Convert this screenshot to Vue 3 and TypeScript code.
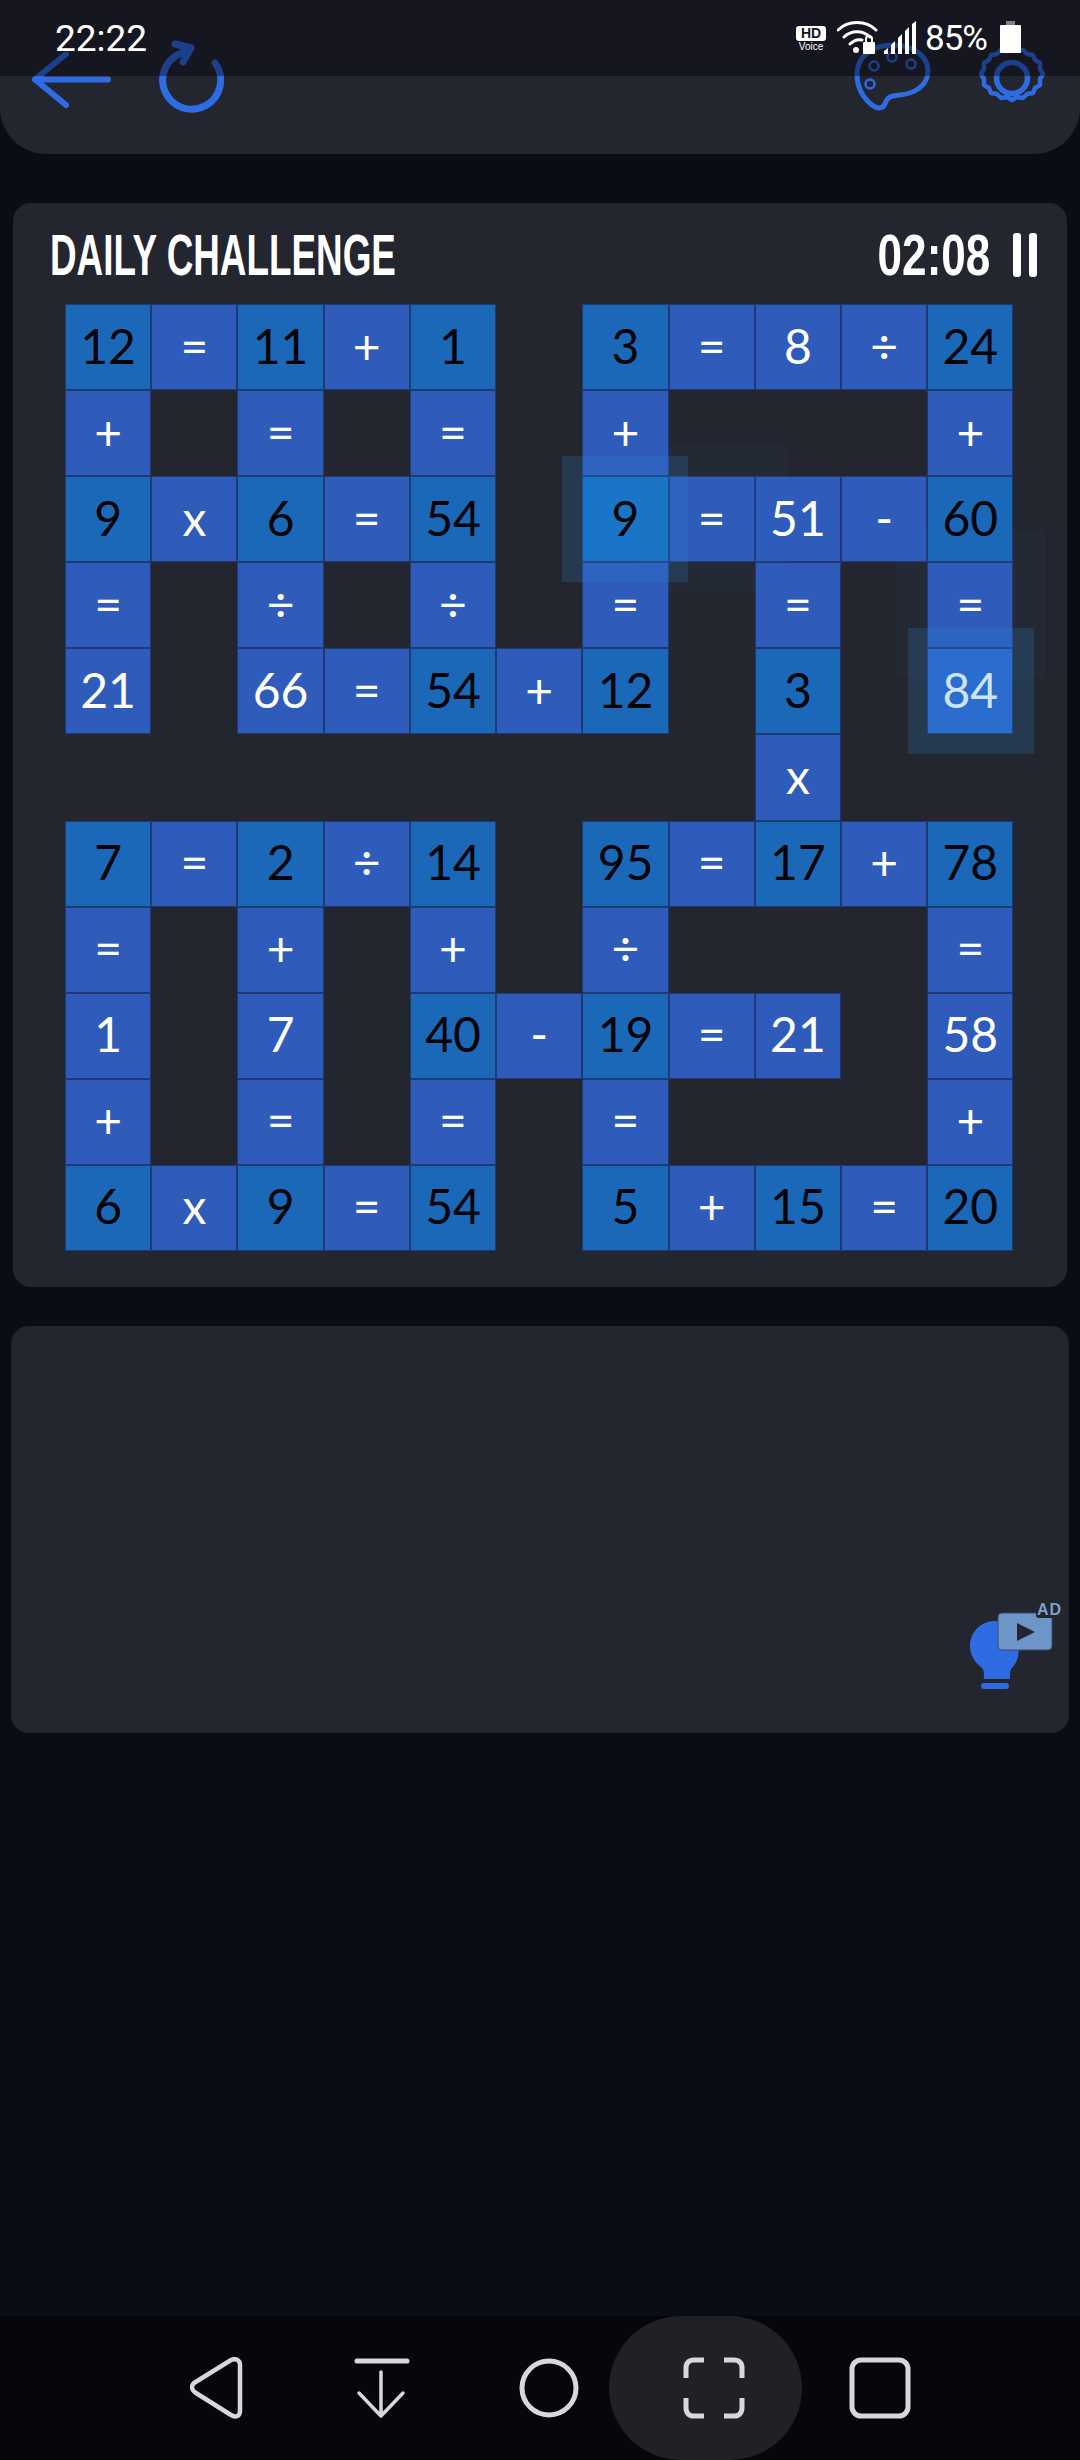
<script setup lang="ts">
type Tone = 'given' | 'open' | 'active' | 'glow'
interface Cell { text: string; tone: Tone }

// Board rows; "." is an empty slot, a leading "*" marks a pre-filled number.
const rows: string[] = [
  '*12 = *11 + *1 . *3 = 8 ÷ *24',
  '+ . = . = . + . . . +',
  '*9 x *6 = *54 . ^9 = 51 - *60',
  '= . ÷ . ÷ . = . = . =',
  '21 . 66 = *54 + *12 . *3 . ~84',
  '. . . . . . . . x . .',
  '*7 = *2 ÷ *14 . *95 = *17 + *78',
  '= . + . + . ÷ . . . =',
  '1 . 7 . *40 - *19 = 21 . 58',
  '+ . = . = . = . . . +',
  '*6 x *9 = *54 . *5 + *15 = *20',
]

const cells: (Cell | null)[] = rows.flatMap((row) =>
  row.split(' ').map((token) => {
    if (token === '.') return null
    if (token[0] === '*') return { text: token.slice(1), tone: 'given' as Tone }
    if (token[0] === '^') return { text: token.slice(1), tone: 'glow' as Tone }
    if (token[0] === '~') return { text: token.slice(1), tone: 'active' as Tone }
    return { text: token, tone: 'open' as Tone }
  }),
)
</script>

<template>
  <div class="screen">
    <header class="toolbar">
      <div class="tool-group">
        <svg class="tool back" width="80" height="60" viewBox="0 0 80 60">
          <path d="M3 27.5H76M3 27.5L34 2M3 27.5L34 53" fill="none" stroke="#2f6ce4" stroke-width="6" stroke-linecap="round" stroke-linejoin="round" />
        </svg>
        <svg class="tool redo" width="70" height="76" viewBox="0 0 70 76">
          <path d="M58 23A29 29 0 1 1 28 12" fill="none" stroke="#2f6ce4" stroke-width="7" stroke-linecap="round" />
          <path d="M18 4L34 8L26 22" fill="none" stroke="#2f6ce4" stroke-width="7" stroke-linejoin="round" stroke-linecap="round" />
        </svg>
      </div>
      <div class="tool-group right">
        <svg class="tool" width="78" height="70" viewBox="0 0 78 70">
          <path d="M4 32C4 14 20 3 40 3C60 3 75 14 75 29C75 43 62 52 46 53C36 54 34 56 32 62C30 67 24 67 19 63C9 55 4 44 4 32Z" fill="none" stroke="#2f6ce4" stroke-width="5" />
          <circle cx="21" cy="24" r="4.5" fill="none" stroke="#2f6ce4" stroke-width="2.5" />
          <circle cx="39" cy="15" r="4.5" fill="none" stroke="#2f6ce4" stroke-width="2.5" />
          <circle cx="58" cy="22" r="4.5" fill="none" stroke="#2f6ce4" stroke-width="2.5" />
          <circle cx="17" cy="42" r="4.5" fill="none" stroke="#2f6ce4" stroke-width="2.5" />
        </svg>
        <svg class="tool gear" width="70" height="66" viewBox="0 0 70 66">
          <path d="M35 3l5 3 6-1 4 4 6 1 2 5 5 3 0 6 3 5-3 5 0 6-5 3-2 5-6 1-4 4-6-1-5 3-5-3-6 1-4-4-6-1-2-5-5-3 0-6-3-5 3-5 0-6 5-3 2-5 6-1 4-4 6 1z" fill="none" stroke="#2f6ce4" stroke-width="4.5" stroke-linejoin="round" />
          <circle cx="35" cy="33" r="15.5" fill="none" stroke="#2f6ce4" stroke-width="5.5" />
        </svg>
      </div>
    </header>

    <section class="card board-card">
      <div class="heading">
        <h1 class="title">DAILY CHALLENGE</h1>
        <div class="timer">
          <span class="time">02:08</span>
          <span class="pause"><i></i><i></i></span>
        </div>
      </div>
      <div class="board">
        <template v-for="(cell, i) in cells" :key="i">
          <div v-if="cell" class="cell" :class="cell.tone"><span>{{ cell.text }}</span></div>
          <div v-else class="slot"></div>
        </template>
        <!-- Fading selection ripples around the picked cells -->
        <div class="ripple strong r-a"></div>
        <div class="ripple faint r-b"></div>
        <div class="ripple strong r-c"></div>
        <div class="ripple faint r-d"></div>
      </div>
    </section>

    <section class="card tray">
      <div class="hint">
        <svg width="90" height="84" viewBox="0 0 90 84">
          <path d="M26 11C12 11 1 22 1 36C1 46 6 52 13 58C15 60 15 63 15 69H41C41 63 41 60 43 58C47 54 50 48 50 36C50 22 40 11 26 11Z" fill="#2f6ce4" />
          <rect x="12" y="73" width="28" height="6" rx="3" fill="#2f6ce4" />
          <rect x="29" y="3" width="54" height="37" rx="4" fill="#6e95c8" stroke="#394a6c" stroke-width="1" />
          <path d="M48 13L66 22L48 31Z" fill="#23252f" />
        </svg>
        <span class="ad">AD</span>
      </div>
    </section>

    <nav class="navbar">
      <svg class="nav-back" width="54" height="62" viewBox="0 0 54 62">
        <path d="M4 26L41 3C46 1 50 3 50 8V54C50 59 46 61 41 58L6 36C1 33 1 29 4 26Z" fill="none" stroke="#d8d8d8" stroke-width="4.5" />
      </svg>
      <svg class="nav-down" width="56" height="62" viewBox="0 0 56 62">
        <path d="M3 4H53" stroke="#d8d8d8" stroke-width="5" stroke-linecap="round" />
        <path d="M27 15V58M5 36L27 59L49 36" fill="none" stroke="#d8d8d8" stroke-width="3.5" stroke-linecap="round" stroke-linejoin="round" />
      </svg>
      <svg class="nav-home" width="62" height="62" viewBox="0 0 62 62">
        <circle cx="31" cy="31" r="27" fill="none" stroke="#d8d8d8" stroke-width="5" />
      </svg>
      <div class="nav-pill">
        <svg width="62" height="62" viewBox="0 0 62 62">
          <path d="M21 3H11C6 3 3 6 3 11V21M41 3H51C56 3 59 6 59 11V21M21 59H11C6 59 3 56 3 51V41M41 59H51C56 59 59 56 59 51V41" fill="none" stroke="#d8d8d8" stroke-width="5" />
        </svg>
      </div>
      <svg class="nav-recent" width="62" height="62" viewBox="0 0 62 62">
        <rect x="3" y="3" width="56" height="56" rx="9" fill="none" stroke="#d8d8d8" stroke-width="5" />
      </svg>
    </nav>

    <!-- System status strip, translucent above the app -->
    <div class="statusbar">
      <span class="clock">22:22</span>
      <div class="status-right">
        <div class="hd"><b>HD</b><small>Voice</small></div>
        <svg width="42" height="34" viewBox="0 0 42 34">
          <path d="M1 9C11 -1 29 -1 39 9M7 16C14 9 26 9 33 16M13 23C17 19 21 18 25 19" fill="none" stroke="#fff" stroke-width="3" stroke-linecap="round" />
          <circle cx="19" cy="29" r="3" fill="#fff" />
          <rect x="26" y="21" width="12" height="12" rx="1" fill="#fff" />
          <path d="M29 21V18C29 14 35 14 35 18V21" fill="none" stroke="#fff" stroke-width="2" />
        </svg>
        <svg class="signal" width="34" height="34" viewBox="0 0 34 34">
          <path d="M1 33V30L5 27V33ZM8 33V24L12 20V33ZM15 33V17L19 13V33ZM22 33V10L26 6V33ZM29 33V3L33 0V33Z" fill="#fff" />
        </svg>
        <span class="pct">85%</span>
        <div class="battery"><i></i><b></b></div>
      </div>
    </div>
  </div>
</template>

<style scoped>
.screen {
  position: relative;
  width: 1080px;
  height: 2460px;
  overflow: hidden;
  display: flex;
  flex-direction: column;
  background: #0a0d15;
}

.toolbar {
  height: 154px;
  flex: none;
  box-sizing: border-box;
  display: flex;
  justify-content: space-between;
  padding: 42px 33px 0 32px;
  background: #23252f;
  border-radius: 0 0 46px 46px;
}
.tool-group { display: flex; gap: 45px; align-items: flex-start; }
.tool-group.right { gap: 46px; }
.tool { display: block; }
.back { margin-top: 10px; }
.redo { margin-top: -2px; }
.gear { margin-top: 3px; }

.card {
  background: #23252f;
  border-radius: 18px;
  box-sizing: border-box;
  flex: none;
}
.board-card {
  margin: 49px 13px 0;
  height: 1084px;
  padding: 0 30px 0 37px;
}
.heading {
  height: 101px;
  box-sizing: border-box;
  padding-top: 3px;
  display: flex;
  justify-content: space-between;
  align-items: center;
  color: #fff;
}
.title {
  margin: 0;
  font-family: "Liberation Sans Narrow", "Liberation Sans", sans-serif;
  font-weight: 700;
  font-size: 58px;
  line-height: 1;
  white-space: nowrap;
  transform: scaleX(0.635);
  transform-origin: left center;
}
.timer { display: flex; align-items: center; gap: 23px; }
.time {
  font-family: "Liberation Sans Narrow", "Liberation Sans", sans-serif;
  font-weight: 700;
  font-size: 58px;
  line-height: 1;
  transform: scaleX(0.76);
  transform-origin: right center;
}
.pause { display: flex; gap: 8px; }
.pause i { display: block; width: 8px; height: 44px; border-radius: 3px; background: #fff; }

.board {
  position: relative;
  width: 948.5px;
  margin-left: 15px;
  display: grid;
  grid-template-columns: repeat(11, 1fr);
  grid-auto-rows: 86.1px;
}
.cell {
  display: flex;
  align-items: center;
  justify-content: center;
  box-sizing: border-box;
  border: 1px solid #1d3a74;
  font-family: Lato, "Open Sans", sans-serif;
  font-size: 48px;
}
.cell span { display: block; position: relative; z-index: 2; transform: translateY(-2px); }
.open { background: #2f5bbb; color: #fff; }
.given { background: #1b68b8; color: #020408; }
.glow { background: #1670c6; color: #020408; }
.active { background: #2a66cc; color: #cfe4fb; }

.ripple { position: absolute; z-index: 1; width: 126px; height: 126px; pointer-events: none; }
.strong { background: rgba(45, 140, 210, 0.2); }
.faint { width: 150px; height: 148px; background: rgba(60, 110, 200, 0.05); }
.r-a { left: 497px; top: 152px; }
.r-b { left: 572px; top: 140px; }
.r-c { left: 843px; top: 324px; }
.r-d { left: 831px; top: 226px; }

.tray {
  position: relative;
  margin: 39px 11px 0;
  height: 407px;
}
.hint { position: absolute; right: 10px; top: 284px; width: 90px; height: 84px; }
.ad {
  position: absolute;
  right: -4px;
  top: -9px;
  padding: 0 1px;
  background: #23252f;
  border-radius: 3px;
  color: #7f9fc8;
  font: 700 16px/17px "Liberation Sans", sans-serif;
  letter-spacing: 1px;
}

.navbar {
  margin-top: auto;
  height: 144px;
  flex: none;
  box-sizing: border-box;
  display: flex;
  align-items: center;
  padding-left: 190px;
  background: #05070c;
}
.navbar svg { display: block; flex: none; }
.nav-down { margin-left: 110px; }
.nav-home { margin-left: 108px; }
.nav-pill {
  flex: none;
  margin-left: 29px;
  width: 193px;
  height: 144px;
  box-sizing: border-box;
  padding-left: 17px;
  border-radius: 72px;
  background: #1f2126;
  display: flex;
  align-items: center;
  justify-content: center;
}
.nav-recent { margin-left: 47px; }

.statusbar {
  position: absolute;
  inset: 0 0 auto 0;
  height: 76px;
  display: flex;
  justify-content: space-between;
  background: rgba(0, 0, 7, 0.4);
  color: #fff;
  font-family: Roboto, sans-serif;
  box-sizing: border-box;
  padding: 0 59px 0 55px;
}
.clock { font-size: 37px; line-height: 36px; padding-top: 21px; }
.status-right { display: flex; align-items: flex-start; padding-top: 21px; }
.hd { width: 30px; display: flex; flex-direction: column; align-items: center; margin: 5px 11px 0 0; }
.hd b {
  display: block;
  width: 30px;
  height: 15px;
  border-radius: 3px;
  background: #fff;
  color: #15161f;
  text-align: center;
  font: 700 14px/15px "Liberation Sans", sans-serif;
}
.hd small { font: 400 10px/11px "Liberation Sans", sans-serif; }
.signal { margin-left: 4px; }
.pct { font-size: 35px; line-height: 36px; margin-left: 8px; letter-spacing: -1px; }
.battery { width: 21px; margin: 0 0 0 13px; display: flex; flex-direction: column; align-items: center; }
.battery i { display: block; width: 9px; height: 4px; background: #808080; }
.battery b { display: block; width: 21px; height: 28px; background: #fff; border-radius: 1px; }
</style>
